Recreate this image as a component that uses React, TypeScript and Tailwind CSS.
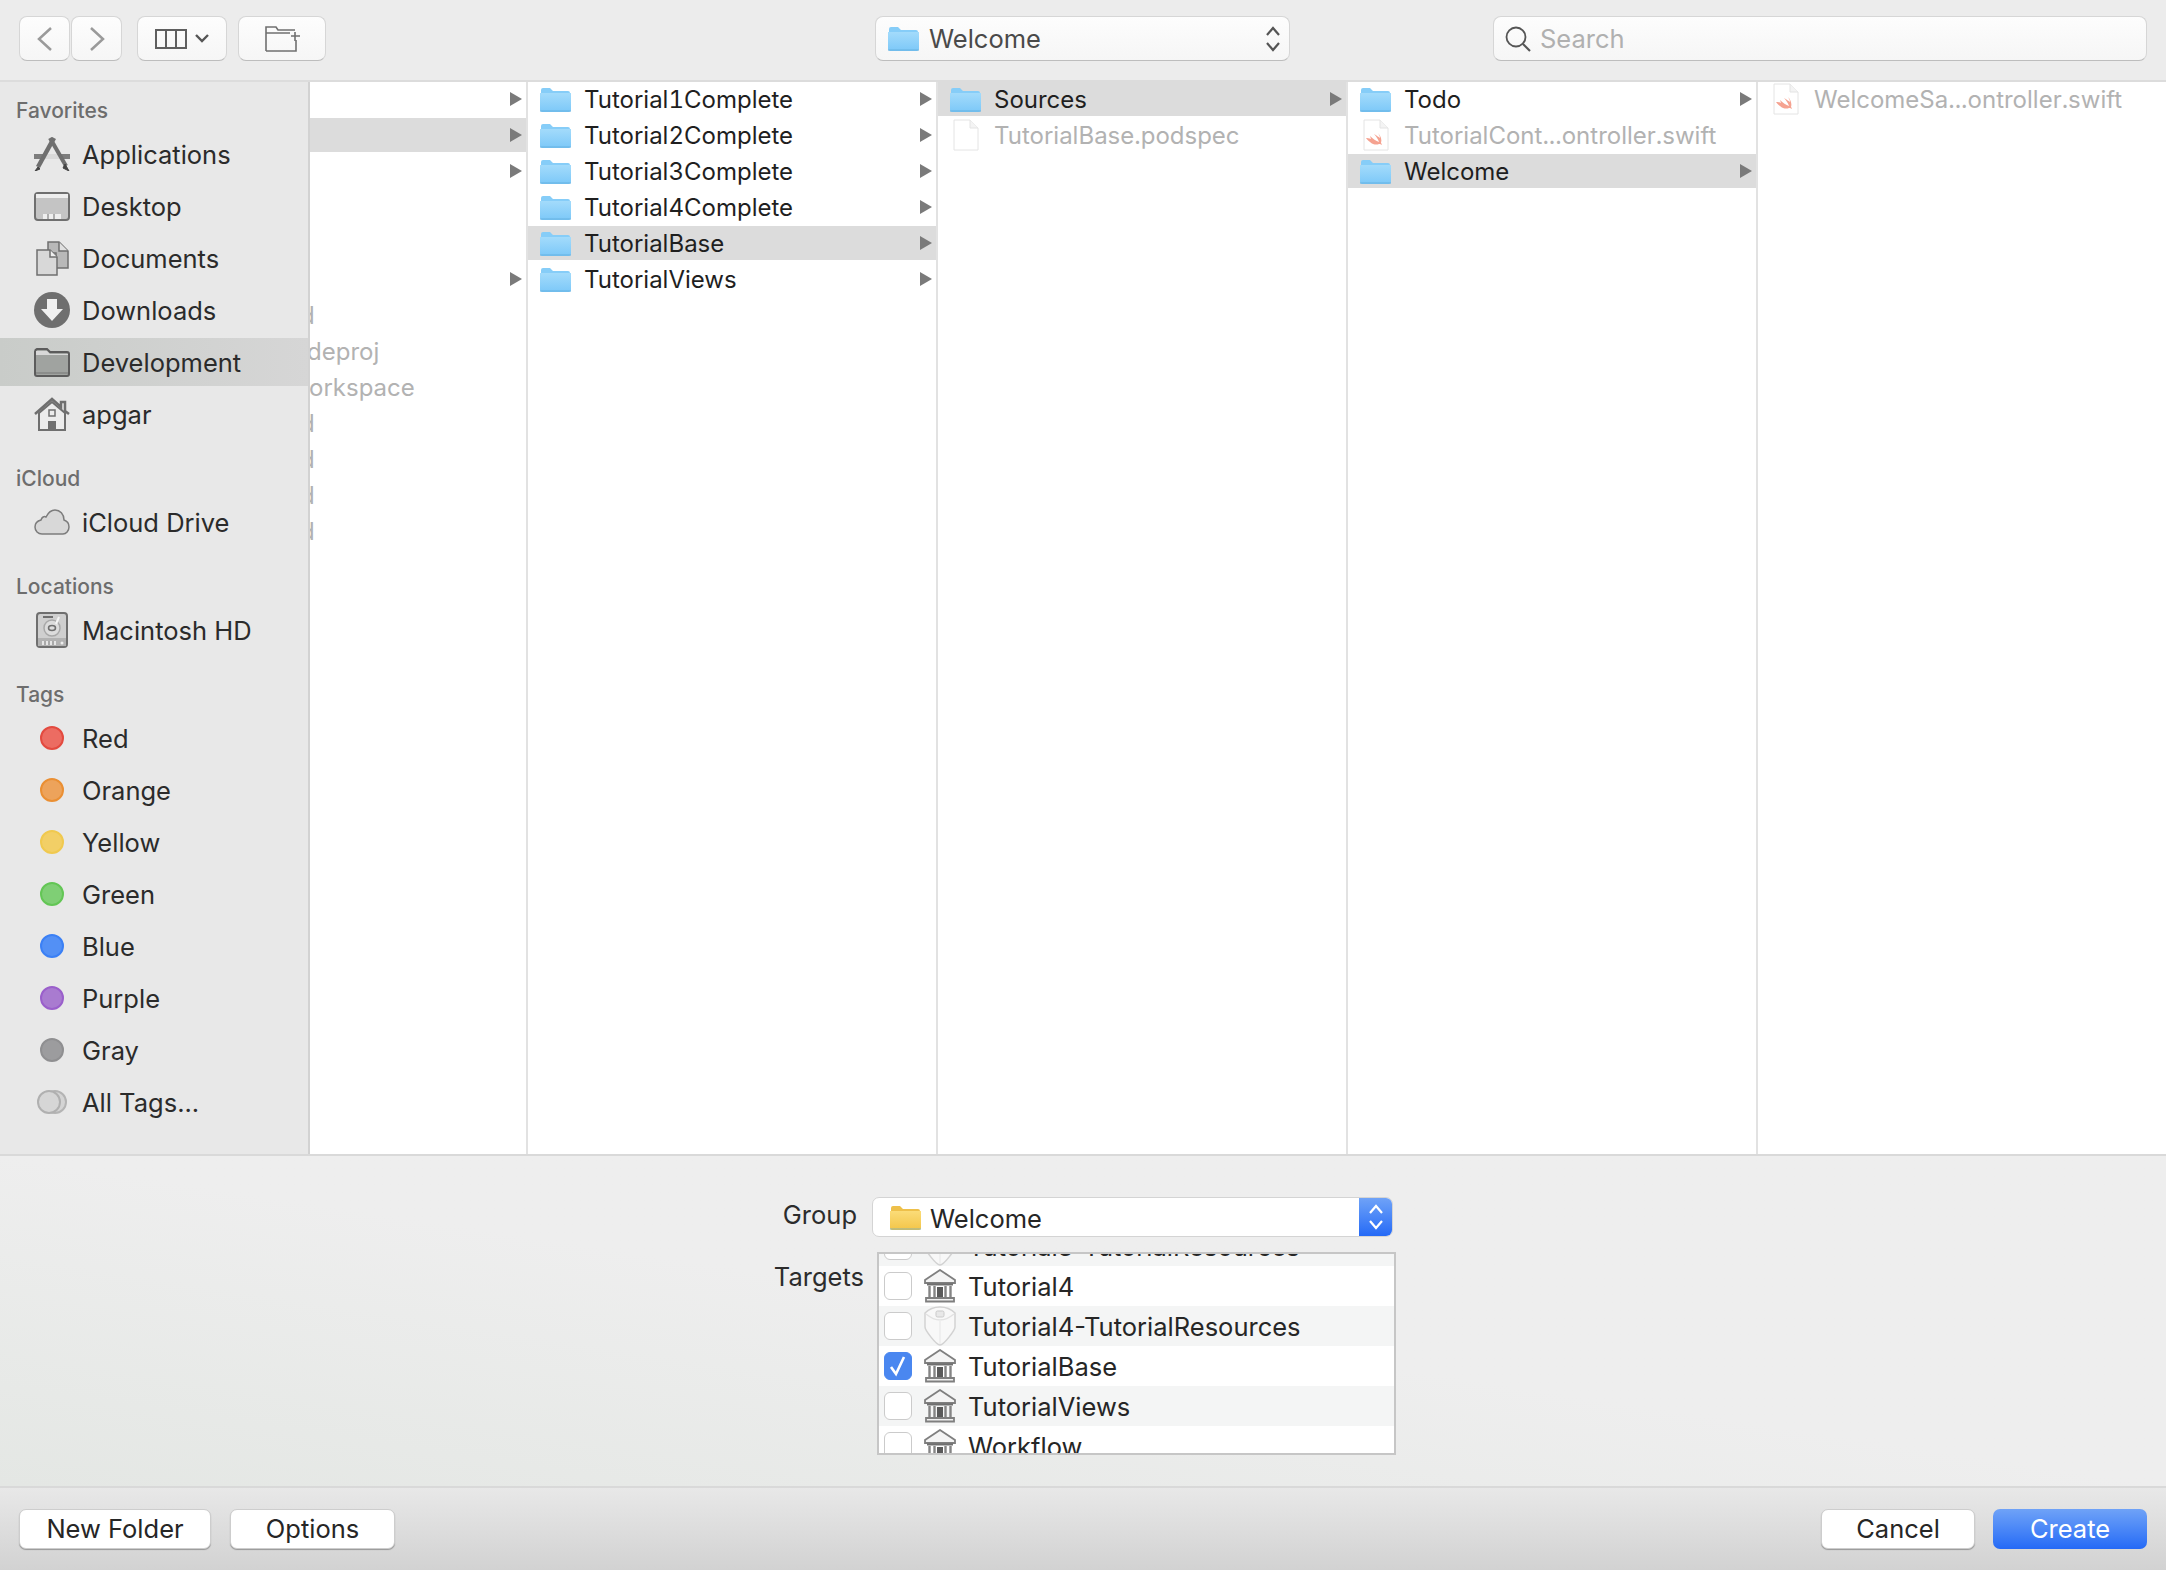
import { ReactNode } from 'react';

const FONT = 'font-["Inter","Liberation_Sans",sans-serif]';

function Folder({ color = 'blue' }: { color?: 'blue' | 'yellow' }) {
  const top = color === 'blue' ? '#a3dbfb' : '#fbdc78';
  const bottom = color === 'blue' ? '#7cc8f8' : '#f3c548';
  const back = color === 'blue' ? '#86cdf8' : '#eec04a';
  const id = `folder-${color}`;
  return (
    <svg width="31" height="25" viewBox="0 0 31 25" className="shrink-0">
      <defs>
        <linearGradient id={id} x1="0" y1="0" x2="0" y2="1">
          <stop offset="0" stopColor={top} />
          <stop offset="1" stopColor={bottom} />
        </linearGradient>
      </defs>
      <path d="M1 3a2 2 0 0 1 2-2h7l3 3h15a2 2 0 0 1 2 2v4H1z" fill={back} />
      <path d="M0 6h31v17a2 2 0 0 1-2 2H2a2 2 0 0 1-2-2z" fill={`url(#${id})`} />
      <path d="M0 24h31" stroke="#5aa7d8" strokeOpacity="0.45" strokeWidth="1.5" />
    </svg>
  );
}

function Doc({ swift }: { swift?: boolean }) {
  return (
    <svg width="26" height="32" viewBox="0 0 26 32" className="shrink-0">
      <path d="M1 1h16l8 8v22H1z" fill="#fff" stroke="#e4e4e4" />
      <path d="M17 1v8h8" fill="#f4f4f4" stroke="#e4e4e4" />
      {swift && (
        <path
          d="M7 17c3 3 6 5 9 6-1-3-3-6-5-8 3 2 5 3 6 4 0-2-1-3-2-5 3 3 4 7 3 10 1 1 1 2 1 2-1-1-2-1-3-1-2 1-6 1-9-2-2-1-3-3-4-4 1 0 3 0 5 1z"
          fill="#f5a290"
        />
      )}
    </svg>
  );
}

function Arrow() {
  return (
    <svg width="12" height="14" viewBox="0 0 12 14" className="shrink-0">
      <path d="M0 0l12 7-12 7z" fill="#7a7a7a" />
    </svg>
  );
}

type Row = { name?: string; kind?: 'folder' | 'doc' | 'swift' | 'clip'; arrow?: boolean; selected?: boolean; clip?: string };

function BrowserColumn({ rows, last, width }: { rows: Row[]; last?: boolean; width: string }) {
  return (
    <div className={`${width} shrink-0 overflow-hidden bg-white text-[24px] tabular-nums flex flex-col gap-[2px] ${last ? '' : 'border-r-2 border-[#e2e2e2]'}`}>
      {rows.map((r, i) => (
        <div key={i} className={`h-[34px] flex items-center pr-[4px] ${r.selected ? 'bg-[#dcdcdc]' : ''}`}>
          {r.kind === 'clip' ? (
            <span className={`${r.clip} pt-[1px] text-[#b2b2b2] whitespace-nowrap`}>{r.name}</span>
          ) : r.name ? (
            <div className="flex items-center min-w-0 pl-[12px] gap-[13px]">
              <div className="w-[31px] flex justify-center">
                {r.kind === 'folder' ? <Folder /> : <Doc swift={r.kind === 'swift'} />}
              </div>
              <span className={`pt-[1px] whitespace-nowrap ${r.kind === 'folder' ? 'text-[#1f1f1f]' : 'text-[#b2b2b2]'}`}>{r.name}</span>
            </div>
          ) : null}
          {r.arrow && <div className="ml-auto"><Arrow /></div>}
        </div>
      ))}
    </div>
  );
}

function ToolButton({ className, children }: { className: string; children: ReactNode }) {
  return (
    <div className={`h-[45px] rounded-[8px] border border-[#d6d6d6] border-b-[#bdbdbd] bg-gradient-to-b from-[#fdfdfd] to-[#f6f6f6] flex items-center ${className}`}>
      {children}
    </div>
  );
}

function SideRow({ label, icon, active }: { label: string; icon: ReactNode; active?: boolean }) {
  return (
    <div className={`h-[48px] mb-[4px] pl-[34px] flex items-center gap-[12px] ${active ? 'bg-gradient-to-r from-[#c9ccc9] to-[#d6d6d6]' : ''}`}>
      <div className="w-[36px] flex justify-center items-center shrink-0">{icon}</div>
      <span className="pt-[1px] text-[#2b2b2b]">{label}</span>
    </div>
  );
}

function SideLabel({ children }: { children: ReactNode }) {
  return <div className="h-[32px] mb-[4px] pl-[16px] flex items-center text-[21px] font-medium text-[#6d6d6d]">{children}</div>;
}

function TagDot({ fill, ring }: { fill: string; ring: string }) {
  return <div className={`w-[24px] h-[24px] rounded-full border-2 ${fill} ${ring}`} />;
}

const GRAY = '#6f6f6f';

function AppsIcon() {
  return (
    <svg width="36" height="34" viewBox="0 0 36 34" fill="none">
      <path d="M0 17h36v5H0z" fill="#7d7d7d" />
      <path d="M11 17h14l2 5H9z" fill="#d9d9d9" />
      <path d="M20 1L4 30" stroke={GRAY} strokeWidth="4.5" />
      <path d="M4 30L1 34l5-2z" fill="#444" stroke="#444" />
      <path d="M16 1l16 28" stroke={GRAY} strokeWidth="4" />
      <path d="M31 27l4 7-6-3z" fill="#444" stroke="#444" />
    </svg>
  );
}
function DesktopIcon() {
  return (
    <svg width="36" height="29" viewBox="0 0 36 29" fill="none">
      <rect x="1" y="1" width="34" height="27" rx="3" fill="#c4c4c4" stroke={GRAY} strokeWidth="2" />
      <path d="M2 2h32v4H2z" fill="#eee" />
      <path d="M9 22h18v5H9z" fill="#eee" />
      <path d="M14 22v5M20 22v5" stroke={GRAY} />
    </svg>
  );
}
function DocumentsIcon() {
  return (
    <svg width="33" height="35" viewBox="0 0 33 35" fill="none">
      <path d="M12 1h11l9 9v17H20V12H12z" fill="#b8b8b8" stroke={GRAY} strokeWidth="1.5" />
      <path d="M23 1v9h9" stroke={GRAY} strokeWidth="1.5" fill="#e0e0e0" />
      <path d="M1 9h13l7 7v18H1z" fill="#d8d8d8" stroke={GRAY} strokeWidth="1.5" />
      <path d="M14 9v7h7" stroke={GRAY} strokeWidth="1.5" fill="#eee" />
    </svg>
  );
}
function DownloadsIcon() {
  return (
    <svg width="36" height="36" viewBox="0 0 36 36">
      <circle cx="18" cy="18" r="18" fill={GRAY} />
      <path d="M13 7h10v10h6L18 29 7 17h6z" fill="#f0f0f0" />
    </svg>
  );
}
function DevFolderIcon() {
  return (
    <svg width="36" height="30" viewBox="0 0 36 30" fill="none">
      <path d="M1 5a3 3 0 0 1 2-3h10l3 3h17a2 2 0 0 1 2 2v20a2 2 0 0 1-2 2H3a2 2 0 0 1-2-2z" fill="#a0a3a0" stroke="#5c5c5c" strokeWidth="2" />
      <path d="M2 4h11l3 3h18v1H2z" fill="#d8d8d8" />
      <path d="M1 26h34" stroke="#5c5c5c" strokeOpacity="0.4" strokeWidth="1.5" />
    </svg>
  );
}
function HomeIcon() {
  return (
    <svg width="36" height="34" viewBox="0 0 36 34" fill="none">
      <path d="M5 16L18 5l13 11v17H5z" fill="#ececec" stroke={GRAY} strokeWidth="2" />
      <path d="M1 17L18 2l9 8V5h4v9l4 3" stroke={GRAY} strokeWidth="2.5" fill="none" />
      <rect x="15" y="13" width="6" height="6" fill="none" stroke={GRAY} strokeWidth="1.5" />
      <rect x="14" y="24" width="8" height="9" fill={GRAY} />
    </svg>
  );
}
function CloudIcon() {
  return (
    <svg width="36" height="26" viewBox="0 0 36 26">
      <path
        d="M8 25C4 25 1 22 1 18c0-3 2-6 6-7 1-3 3-4 5-3 2-4 5-7 9-7 5 0 9 4 9 10 3 1 5 4 5 7 0 4-3 7-6 7z"
        fill="#d8d8d8"
        stroke="#7c7c7c"
        strokeWidth="1.5"
      />
    </svg>
  );
}
function DiskIcon() {
  return (
    <svg width="32" height="36" viewBox="0 0 32 36" fill="none">
      <rect x="1" y="1" width="30" height="34" rx="3" fill="#cfcfcf" stroke={GRAY} strokeWidth="2" />
      <path d="M2 26h28v8H2z" fill="#b2b2b2" />
      <path d="M6 29h14v4H6z" fill="#e6e6e6" />
      <path d="M9 29v4M13 29v4M17 29v4" stroke={GRAY} />
      <circle cx="26" cy="31" r="1.5" fill="#eee" />
      <path d="M7 5h10" stroke={GRAY} strokeWidth="2" />
      <circle cx="16" cy="16" r="8" fill="#dcdcdc" stroke="#a8a8a8" strokeWidth="1.5" />
      <ellipse cx="16" cy="16" rx="3.5" ry="2.5" stroke={GRAY} strokeWidth="1.5" />
      <path d="M20 12l3-7" stroke="#f4f4f4" strokeWidth="2" />
    </svg>
  );
}
function AllTagsIcon() {
  return (
    <div className="relative w-[30px] h-[24px]">
      <div className="absolute left-[6px] top-0 w-[24px] h-[24px] rounded-full border-2 border-[#b4b4b4] bg-[#d4d4d4]" />
      <div className="absolute left-0 top-0 w-[24px] h-[24px] rounded-full border-2 border-[#b0b0b0] bg-[#d6d6d6]" />
    </div>
  );
}

function BankIcon() {
  return (
    <svg width="32" height="34" viewBox="0 0 32 34" fill="none" className="shrink-0">
      <path d="M16 1L31 11v3H1v-3z" fill="#f4f4f4" stroke="#7f7f7f" strokeWidth="1.8" />
      <path d="M3 15.5h26" stroke="#6f6f6f" strokeWidth="2" />
      <path d="M5.5 17v11M10.5 17v11M21.5 17v11M26.5 17v11" stroke="#858585" strokeWidth="2.4" />
      <path d="M13 18h6v10h-6z" fill="#5a5a5a" />
      <path d="M2 29h28v3.5H2z" fill="#f0f0f0" stroke="#7f7f7f" strokeWidth="1.8" />
    </svg>
  );
}
function BundleIcon() {
  return (
    <svg width="32" height="40" viewBox="0 0 32 40" fill="none" className="shrink-0">
      <path d="M16 1c5 0 11 2 15 6v14c0 3-11 18-15 18S1 24 1 21V7c4-4 10-6 15-6z" fill="#f8f8f8" stroke="#d2d2d2" strokeWidth="1.5" />
      <path d="M2 8c5 4 9 6 14 6s9-2 14-6" stroke="#e2e2e2" strokeWidth="1.5" />
      <path d="M16 14v24" stroke="#ececec" strokeWidth="1.5" />
      <rect x="12" y="5" width="8" height="6" rx="1.5" fill="#e8e8e8" stroke="#cacaca" />
    </svg>
  );
}

function Target({ name, icon, alt, checked }: { name: string; icon: 'bank' | 'bundle'; alt?: boolean; checked?: boolean }) {
  return (
    <div className={`h-[40px] shrink-0 pl-[5px] flex items-center ${alt ? 'bg-[#f4f5f5]' : 'bg-white'}`}>
      <div className={`w-[28px] h-[28px] rounded-[6px] flex items-center justify-center border shrink-0 ${checked ? 'bg-[#4a87f0] border-[#4a87f0]' : 'bg-white border-[#cbcbcb]'}`}>
        {checked && (
          <svg width="18" height="22" viewBox="0 0 18 22" fill="none">
            <path d="M2 12l5 7L15 2" stroke="#fff" strokeWidth="2.6" />
          </svg>
        )}
      </div>
      <div className="w-[32px] ml-[12px] flex justify-center shrink-0">{icon === 'bank' ? <BankIcon /> : <BundleIcon />}</div>
      <span className="ml-[12px] pt-[2px] whitespace-nowrap text-[#262626]">{name}</span>
    </div>
  );
}

function Button({ label, width, primary }: { label: string; width: string; primary?: boolean }) {
  return (
    <div
      className={`${width} h-[40px] rounded-[7px] flex items-center justify-center ${
        primary
          ? 'bg-gradient-to-b from-[#6fa2f7] to-[#2469f6] text-white'
          : 'bg-white text-[#262626] border border-[#cdcdcd] shadow-[0_1px_1px_rgba(0,0,0,0.3)]'
      }`}
    >
      {label}
    </div>
  );
}

const col1: Row[] = [
  { arrow: true },
  { arrow: true, selected: true },
  { arrow: true },
  {},
  {},
  { arrow: true },
  { kind: 'clip', name: 'd', clip: '-ml-[10px]' },
  { kind: 'clip', name: 'deproj', clip: '-ml-[3px]' },
  { kind: 'clip', name: 'orkspace', clip: '-ml-[1px]' },
  { kind: 'clip', name: 'd', clip: '-ml-[10px]' },
  { kind: 'clip', name: 'd', clip: '-ml-[10px]' },
  { kind: 'clip', name: 'd', clip: '-ml-[10px]' },
  { kind: 'clip', name: 'd', clip: '-ml-[10px]' },
];

const col2: Row[] = [
  { name: 'Tutorial1Complete', kind: 'folder', arrow: true },
  { name: 'Tutorial2Complete', kind: 'folder', arrow: true },
  { name: 'Tutorial3Complete', kind: 'folder', arrow: true },
  { name: 'Tutorial4Complete', kind: 'folder', arrow: true },
  { name: 'TutorialBase', kind: 'folder', arrow: true, selected: true },
  { name: 'TutorialViews', kind: 'folder', arrow: true },
];

const col3: Row[] = [
  { name: 'Sources', kind: 'folder', arrow: true, selected: true },
  { name: 'TutorialBase.podspec', kind: 'doc' },
];

const col4: Row[] = [
  { name: 'Todo', kind: 'folder', arrow: true },
  { name: 'TutorialCont...ontroller.swift', kind: 'swift' },
  { name: 'Welcome', kind: 'folder', arrow: true, selected: true },
];

const col5: Row[] = [{ name: 'WelcomeSa...ontroller.swift', kind: 'swift' }];

export default function App() {
  return (
    <div className={`${FONT} w-[2166px] h-[1570px] overflow-hidden flex flex-col text-[25.5px] leading-none bg-[#ececec]`}>
      {/* toolbar */}
      <div className="h-[82px] shrink-0 border-b-2 border-[#dcdcdc] pl-[19px] pr-[19px] pt-[16px] flex items-start">
        <ToolButton className="w-[51px] justify-center">
          <svg width="18" height="26" viewBox="0 0 18 26" fill="none"><path d="M15 2L3 13l12 11" stroke="#9a9a9a" strokeWidth="2.5" /></svg>
        </ToolButton>
        <ToolButton className="w-[51px] ml-[1px] justify-center">
          <svg width="18" height="26" viewBox="0 0 18 26" fill="none"><path d="M3 2l12 11L3 24" stroke="#9a9a9a" strokeWidth="2.5" /></svg>
        </ToolButton>
        <ToolButton className="w-[90px] ml-[15px] justify-center gap-[8px]">
          <svg width="32" height="20" viewBox="0 0 32 20" fill="none">
            <path d="M1 1h30v18H1zM11 1v18M21 1v18" stroke="#5f5f5f" strokeWidth="2" />
          </svg>
          <svg width="14" height="9" viewBox="0 0 14 9" fill="none"><path d="M1 1l6 6 6-6" stroke="#555" strokeWidth="2.4" /></svg>
        </ToolButton>
        <ToolButton className="w-[88px] ml-[11px] justify-center">
          <svg width="35" height="26" viewBox="0 0 35 26" fill="none">
            <path d="M1 25V1h10l2 3h17M31 14v11H1M1 7h24" stroke="#707070" strokeWidth="1.6" />
            <path d="M30 6v9M26 10h9" stroke="#707070" strokeWidth="1.6" />
          </svg>
        </ToolButton>
        <ToolButton className="w-[415px] ml-[549px] pl-[12px] pr-[8px]">
          <Folder />
          <span className="ml-[10px] text-[#4a4a4a]">Welcome</span>
          <svg className="ml-auto" width="16" height="26" viewBox="0 0 16 26" fill="none">
            <path d="M2 9l6-7 6 7M2 17l6 7 6-7" stroke="#555" strokeWidth="2.2" />
          </svg>
        </ToolButton>
        <ToolButton className="w-[654px] ml-[203px] pl-[10px]">
          <svg width="28" height="28" viewBox="0 0 28 28" fill="none">
            <circle cx="12" cy="12" r="9.5" stroke="#555" strokeWidth="1.8" />
            <path d="M19 19l7 7" stroke="#555" strokeWidth="2.2" />
          </svg>
          <span className="ml-[8px] text-[#b0b0b0]">Search</span>
        </ToolButton>
      </div>

      {/* browser */}
      <div className="h-[1074px] shrink-0 flex border-b-2 border-[#d9d9d9] bg-white">
        <div className="w-[310px] shrink-0 border-r-2 border-[#d2d2d2] bg-[#e8e8e8] pt-[12px]">
          <SideLabel>Favorites</SideLabel>
          <SideRow label="Applications" icon={<AppsIcon />} />
          <SideRow label="Desktop" icon={<DesktopIcon />} />
          <SideRow label="Documents" icon={<DocumentsIcon />} />
          <SideRow label="Downloads" icon={<DownloadsIcon />} />
          <SideRow label="Development" icon={<DevFolderIcon />} active />
          <SideRow label="apgar" icon={<HomeIcon />} />
          <div className="h-[20px]" />
          <SideLabel>iCloud</SideLabel>
          <SideRow label="iCloud Drive" icon={<CloudIcon />} />
          <div className="h-[20px]" />
          <SideLabel>Locations</SideLabel>
          <SideRow label="Macintosh HD" icon={<DiskIcon />} />
          <div className="h-[20px]" />
          <SideLabel>Tags</SideLabel>
          <SideRow label="Red" icon={<TagDot fill="bg-[#ec6c62]" ring="border-[#e34a3f]" />} />
          <SideRow label="Orange" icon={<TagDot fill="bg-[#eda35b]" ring="border-[#ea8f33]" />} />
          <SideRow label="Yellow" icon={<TagDot fill="bg-[#f2cf66]" ring="border-[#f0c94f]" />} />
          <SideRow label="Green" icon={<TagDot fill="bg-[#7fcf75]" ring="border-[#63c655]" />} />
          <SideRow label="Blue" icon={<TagDot fill="bg-[#5390f5]" ring="border-[#3b80f5]" />} />
          <SideRow label="Purple" icon={<TagDot fill="bg-[#a97bd0]" ring="border-[#9a5fcb]" />} />
          <SideRow label="Gray" icon={<TagDot fill="bg-[#9c9c9e]" ring="border-[#8f8f91]" />} />
          <SideRow label="All Tags..." icon={<AllTagsIcon />} />
        </div>
        <BrowserColumn rows={col1} width="w-[218px]" />
        <BrowserColumn rows={col2} width="w-[410px]" />
        <BrowserColumn rows={col3} width="w-[410px]" />
        <BrowserColumn rows={col4} width="w-[410px]" />
        <BrowserColumn rows={col5} width="w-[408px]" last />
      </div>

      {/* save options */}
      <div className="h-[332px] shrink-0 border-b-2 border-[#d9d9d9] bg-gradient-to-tr from-[#e4e7e4] via-[#eeeeee] to-[#eeeeee] pt-[41px]">
        <div className="flex items-center h-[40px]">
          <span className="w-[857px] pb-[4px] text-right text-[#2c2c2c]">Group</span>
          <div className="ml-[15px] w-[521px] h-[40px] rounded-[7px] bg-white border border-[#d4d4d4] flex items-center overflow-hidden">
            <div className="ml-[17px]"><Folder color="yellow" /></div>
            <span className="ml-[9px] pt-[3px] text-[#262626]">Welcome</span>
            <div className="ml-auto w-[33px] h-full bg-gradient-to-b from-[#6fa2f7] to-[#2469f6] flex items-center justify-center">
              <svg width="16" height="26" viewBox="0 0 16 26" fill="none">
                <path d="M2 9l6-7 6 7M2 17l6 7 6-7" stroke="#fff" strokeWidth="2.2" />
              </svg>
            </div>
          </div>
        </div>
        <div className="flex mt-[15px]">
          <span className="w-[864px] pt-[12px] text-right text-[#2c2c2c]">Targets</span>
          <div className="ml-[13px] w-[519px] h-[203px] border-2 border-[#c6c6c6] bg-white overflow-hidden flex flex-col">
            <div className="-mt-[28px] flex flex-col">
              <Target name="Tutorial3-TutorialResources" icon="bundle" alt />
              <Target name="Tutorial4" icon="bank" />
              <Target name="Tutorial4-TutorialResources" icon="bundle" alt />
              <Target name="TutorialBase" icon="bank" checked />
              <Target name="TutorialViews" icon="bank" alt />
              <Target name="Workflow" icon="bank" />
            </div>
          </div>
        </div>
      </div>

      {/* footer */}
      <div className="flex-1 bg-gradient-to-b from-[#e8e8e8] to-[#d2d2d2] pl-[19px] pr-[19px] pt-[21px] flex items-start">
        <Button label="New Folder" width="w-[192px]" />
        <div className="w-[19px]" />
        <Button label="Options" width="w-[165px]" />
        <div className="ml-auto" />
        <Button label="Cancel" width="w-[154px]" />
        <div className="w-[18px]" />
        <Button label="Create" width="w-[154px]" primary />
      </div>
    </div>
  );
}
